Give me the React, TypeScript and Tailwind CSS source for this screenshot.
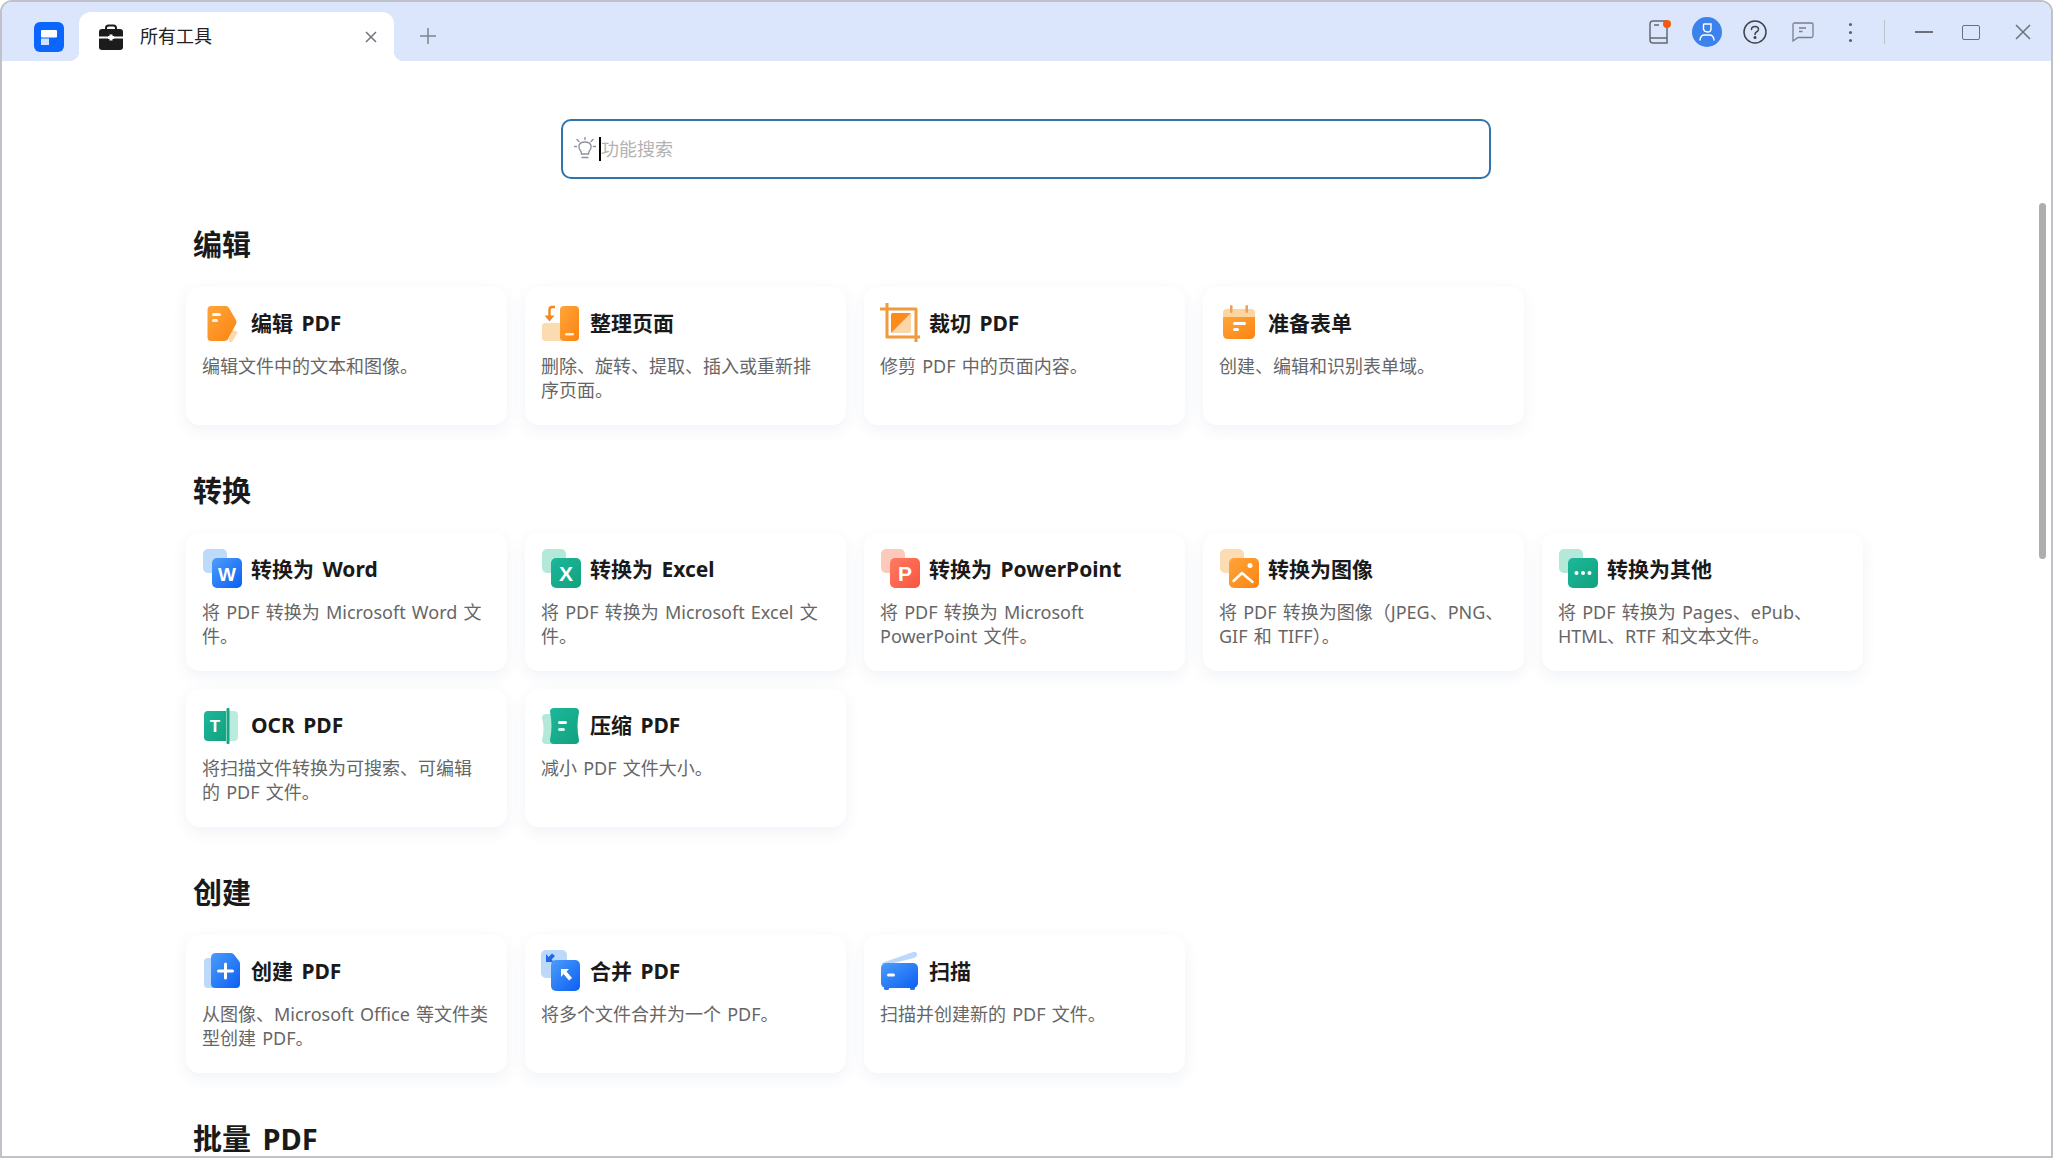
type Tool = { icon: string; title: string; desc: string };
type Section = { heading: string; tools: Tool[] };

const sections: Section[] = [
  {
    heading: "编辑",
    tools: [
      { icon: "edit", title: "编辑 PDF", desc: "编辑文件中的文本和图像。" },
      { icon: "pages", title: "整理页面", desc: "删除、旋转、提取、插入或重新排\n序页面。" },
      { icon: "crop", title: "裁切 PDF", desc: "修剪 PDF 中的页面内容。" },
      { icon: "form", title: "准备表单", desc: "创建、编辑和识别表单域。" },
    ],
  },
  {
    heading: "转换",
    tools: [
      { icon: "word", title: "转换为 Word", desc: "将 PDF 转换为 Microsoft Word 文\n件。" },
      { icon: "excel", title: "转换为 Excel", desc: "将 PDF 转换为 Microsoft Excel 文\n件。" },
      { icon: "ppt", title: "转换为 PowerPoint", desc: "将 PDF 转换为 Microsoft\nPowerPoint 文件。" },
      { icon: "image", title: "转换为图像", desc: "将 PDF 转换为图像（JPEG、PNG、\nGIF 和 TIFF）。" },
      { icon: "other", title: "转换为其他", desc: "将 PDF 转换为 Pages、ePub、\nHTML、RTF 和文本文件。" },
      { icon: "ocr", title: "OCR PDF", desc: "将扫描文件转换为可搜索、可编辑\n的 PDF 文件。" },
      { icon: "compress", title: "压缩 PDF", desc: "减小 PDF 文件大小。" },
    ],
  },
  {
    heading: "创建",
    tools: [
      { icon: "create", title: "创建 PDF", desc: "从图像、Microsoft Office 等文件类\n型创建 PDF。" },
      { icon: "merge", title: "合并 PDF", desc: "将多个文件合并为一个 PDF。" },
      { icon: "scan", title: "扫描", desc: "扫描并创建新的 PDF 文件。" },
    ],
  },
];

const svgFont = "Liberation Sans, Arial, sans-serif";

// shared gradients, the icons below refer to these by id
function Gradients() {
  return (
    <svg width="0" height="0" className="block h-0 w-0">
      <defs>
        <linearGradient id="g-orange" x1="0" y1="0" x2="1" y2="1">
          <stop offset="0" stopColor="#ffa53a" />
          <stop offset="1" stopColor="#fb8412" />
        </linearGradient>
        <linearGradient id="g-blue" x1="0" y1="0" x2="1" y2="1">
          <stop offset="0" stopColor="#4d9dfb" />
          <stop offset="1" stopColor="#0b5ff2" />
        </linearGradient>
        <linearGradient id="g-green" x1="0" y1="0" x2="1" y2="1">
          <stop offset="0" stopColor="#1cb79a" />
          <stop offset="1" stopColor="#12a27f" />
        </linearGradient>
        <linearGradient id="g-red" x1="0" y1="0" x2="1" y2="1">
          <stop offset="0" stopColor="#ff7b63" />
          <stop offset="1" stopColor="#f9543f" />
        </linearGradient>
      </defs>
    </svg>
  );
}

function StackedIcon({ back, front, children }: { back: string; front: string; children: React.ReactNode }) {
  return (
    <>
      <rect x="1" y="0" width="24" height="24" rx="5" fill={back} />
      <rect x="10" y="9" width="30" height="30" rx="5" fill={front} />
      {children}
    </>
  );
}

function ToolIcon({ name }: { name: string }) {
  let body: React.ReactNode = null;
  if (name === "edit") {
    body = (
      <>
        <path d="M30 27 L36 29 L30 39 Q27 40 27 36 Z" fill="#fcd9a8" />
        <path d="M9 3 H24 Q26 3 27 5 L34 17 Q35 19 34 21 L27 34 Q26 38 22 38 H9 Q5.500 38 5.500 34 V7 Q5.500 3 9 3 Z" fill="url(#g-orange)" />
        <rect x="10" y="10" width="9" height="3" rx="1.500" fill="#fff" opacity="0.9" />
        <rect x="10" y="16" width="6" height="3" rx="1.500" fill="#fff" opacity="0.9" />
      </>
    );
  }
  if (name === "pages") {
    body = (
      <>
        <rect x="1" y="20" width="20" height="18" rx="3" fill="#fbdcb0" />
        <path d="M14 4 H11 Q8.500 4 8.500 7 V15" fill="none" stroke="#f08a20" strokeWidth="2.500" />
        <path d="M3.500 12.500 H13.500 L8.500 18.500 Z" fill="#f08a20" />
        <rect x="19" y="3" width="19" height="35" rx="4" fill="url(#g-orange)" />
        <rect x="24" y="30" width="9" height="2.500" rx="1.200" fill="#fff" opacity="0.85" />
      </>
    );
  }
  if (name === "crop") {
    body = (
      <>
        <path d="M7 0 V34 H40 M0 6 H36 V39" fill="none" stroke="#ef9a3c" strokeWidth="3" strokeLinejoin="round" />
        <rect x="11" y="10" width="20" height="20" rx="2" fill="#fbd6a8" />
        <path d="M13 10 H31 L11 30 V12 Q11 10 13 10 Z" fill="#fb8c1b" />
      </>
    );
  }
  if (name === "form") {
    body = (
      <>
        <path d="M4 16 V10 Q4 6 8 6 H32 Q36 6 36 10 V16 Z" fill="#fcd5a0" />
        <rect x="11" y="2" width="2.500" height="8" rx="1.200" fill="#f0a050" />
        <rect x="26.500" y="2" width="2.500" height="8" rx="1.200" fill="#f0a050" />
        <path d="M4 14 H36 V31 Q36 36 31 36 H9 Q4 36 4 31 Z" fill="url(#g-orange)" />
        <rect x="14" y="19" width="13" height="3" rx="1.500" fill="#fff" />
        <rect x="14" y="25" width="6" height="3" rx="1.500" fill="#fff" />
      </>
    );
  }
  if (name === "word" || name === "excel" || name === "ppt") {
    const back = name === "word" ? "#bedafb" : name === "excel" ? "#b4e8d8" : "#fdc9bb";
    const front = name === "word" ? "url(#g-blue)" : name === "excel" ? "url(#g-green)" : "url(#g-red)";
    const letter = name === "word" ? "W" : name === "excel" ? "X" : "P";
    body = (
      <StackedIcon back={back} front={front}>
        <text x="25" y="32" textAnchor="middle" fontFamily={svgFont} fontWeight="700" fontSize={name === "word" ? 19 : 21} fill="#fff">
          {letter}
        </text>
      </StackedIcon>
    );
  }
  if (name === "image") {
    body = (
      <StackedIcon back="#fcdcb2" front="url(#g-orange)">
        <circle cx="31" cy="16.500" r="2.500" fill="#fff" />
        <path d="M14.500 32 L23 24 L33.500 33" fill="none" stroke="#fff" strokeWidth="2.500" strokeLinecap="round" strokeLinejoin="round" />
      </StackedIcon>
    );
  }
  if (name === "other") {
    body = (
      <StackedIcon back="#b4e8d8" front="url(#g-green)">
        <circle cx="18.500" cy="24" r="2" fill="#fff" />
        <circle cx="25" cy="24" r="2" fill="#fff" />
        <circle cx="31.500" cy="24" r="2" fill="#fff" />
      </StackedIcon>
    );
  }
  if (name === "ocr") {
    body = (
      <>
        <path d="M26 6 H32 Q36 6 36 10 V32 Q36 36 32 36 H26 Z" fill="#b9ecdd" />
        <path d="M6 6 H24 V36 H6 Q2 36 2 32 V10 Q2 6 6 6 Z" fill="url(#g-green)" />
        <rect x="24.500" y="3" width="3" height="36" rx="1" fill="#14a584" />
        <text x="13" y="27" textAnchor="middle" fontFamily={svgFont} fontWeight="700" fontSize="17" fill="#fff">
          T
        </text>
      </>
    );
  }
  if (name === "compress") {
    body = (
      <>
        <path d="M5 9 H14 V39 H5 Q1 39 1 35 Q4 24 1 13 Q1 9 5 9 Z" fill="#b4e8d8" />
        <path d="M13 3 H34 Q38 3 38 7 Q35 21 38 35 Q38 39 34 39 H13 Q9 39 9 35 Q12 21 9 7 Q9 3 13 3 Z" fill="url(#g-green)" />
        <rect x="17" y="16" width="9" height="3" rx="1.500" fill="#fff" />
        <rect x="17" y="23" width="7" height="3" rx="1.500" fill="#d5f5ec" />
      </>
    );
  }
  if (name === "create") {
    body = (
      <>
        <rect x="2" y="7" width="20" height="30" rx="4" fill="#bcd9fb" />
        <path d="M14 2 H29 Q31 2 32 3.500 L37 10 Q38 11 38 13 V33 Q38 37 34 37 H14 Q9 37 9 33 V7 Q9 2 14 2 Z" fill="url(#g-blue)" />
        <path d="M23.500 13 V27 M16.500 20 H30.500" stroke="#fff" strokeWidth="3" strokeLinecap="round" />
      </>
    );
  }
  if (name === "merge") {
    body = (
      <>
        <rect x="0" y="-1" width="26" height="28" rx="5" fill="#bcd9fb" />
        <path d="M5 3 L5 11 L13 11 L10.500 8.500 L14 5 L11 2.500 L7.500 6 Z" fill="#1c68ee" />
        <rect x="10" y="9" width="29" height="31" rx="5" fill="url(#g-blue)" />
        <path d="M20 18 H28 L25.500 20.500 L31 27 L28 29.500 L22.500 23 L20 26 Z" fill="#fff" />
      </>
    );
  }
  if (name === "scan") {
    body = (
      <>
        <path d="M2 12 L33 1 Q37 0 37 4 Q37 6 34 7 L6 14 Q1 14 2 12 Z" fill="#bcd9fb" />
        <rect x="4" y="35" width="5" height="4" rx="1.500" fill="#2a76f0" />
        <rect x="30" y="35" width="5" height="4" rx="1.500" fill="#2a76f0" />
        <rect x="1" y="12" width="37" height="25" rx="5" fill="url(#g-blue)" />
        <rect x="7" y="22.500" width="8" height="3" rx="1.500" fill="#fff" />
      </>
    );
  }
  return (
    <svg width="40" height="40" viewBox="0 0 40 40" className="shrink-0 overflow-visible">
      {body}
    </svg>
  );
}

function ToolCard({ tool }: { tool: Tool }) {
  return (
    <div className="h-[138px] rounded-[14px] bg-white pl-[16px] pt-[16px] shadow-[0_5px_16px_rgba(40,70,130,0.07)]">
      <div className="flex h-[40px] items-center gap-[9px]">
        <ToolIcon name={tool.icon} />
        <span className="text-[21px] leading-[28px] font-bold [word-spacing:3px] text-[#1a1a1a]">{tool.title}</span>
      </div>
      <p className="mt-[11px] text-[18px] leading-[24px] whitespace-pre [word-spacing:1.5px] text-[#666666]">{tool.desc}</p>
    </div>
  );
}

function TitleBar() {
  return (
    <header className="flex h-[59px] shrink-0 items-end bg-[#dbe5fb]">
      <div className="mb-[9px] ml-[32px] flex h-[30px] w-[30px] shrink-0 items-center justify-center self-end rounded-[6px] bg-[#0a66ff]">
        <svg width="30" height="30" viewBox="0 0 30 30">
          <rect x="7" y="8" width="16" height="7.500" rx="1" fill="#fff" />
          <rect x="7" y="16.500" width="8" height="6.500" fill="#cfe2ff" />
        </svg>
      </div>
      <div className="relative ml-[15px] flex h-[49px] w-[315px] shrink-0 items-center rounded-t-[12px] bg-white pl-[20px] pr-[17px] before:absolute before:bottom-0 before:left-[-10px] before:h-[10px] before:w-[10px] before:bg-[radial-gradient(circle_at_0_0,transparent_10px,white_10.5px)] after:absolute after:right-[-10px] after:bottom-0 after:h-[10px] after:w-[10px] after:bg-[radial-gradient(circle_at_100%_0,transparent_10px,white_10.5px)]">
        <svg width="24" height="26" viewBox="0 0 24 26" className="shrink-0">
          <path d="M7 6 V4 Q7 1.500 9.500 1.500 H14.500 Q17 1.500 17 4 V6" fill="none" stroke="#1c1c1c" strokeWidth="2" />
          <path d="M3 5 H21 Q24 5 24 8 V12.500 H0 V8 Q0 5 3 5 Z" fill="#1c1c1c" />
          <path d="M0 14.500 H24 V23 Q24 26 21 26 H3 Q0 26 0 23 Z" fill="#1c1c1c" />
          <path d="M9 12 H10.500 V10.500 H13.500 V12 H15 V15 H13.500 V16.500 H10.500 V15 H9 Z" fill="#fff" />
        </svg>
        <span className="ml-[17px] text-[18px] text-[#222222]">所有工具</span>
        <svg width="12" height="12" viewBox="0 0 12 12" className="ml-auto" stroke="#70747c" strokeWidth="1.500">
          <path d="M1 1 L11 11 M11 1 L1 11" />
        </svg>
      </div>
      <svg width="16" height="16" viewBox="0 0 16 16" className="mb-[17px] ml-[26px]" stroke="#7d828e" strokeWidth="1.500">
        <path d="M8 0 V16 M0 8 H16" />
      </svg>
      <div className="ml-auto flex h-[58px] items-center self-start pt-[2px]">
        <div className="flex w-[48px] justify-center">
          <svg width="24" height="26" viewBox="0 0 24 26" fill="none" className="overflow-visible">
            <path d="M3 5 Q3 2 6 2 H20 V24 H6 Q3 24 3 21 Z" stroke="#666a72" strokeWidth="1.500" />
            <path d="M3 19 H20 M7 6 H12" stroke="#666a72" strokeWidth="1.500" />
            <circle cx="20" cy="5" r="4" fill="#f4590f" />
          </svg>
        </div>
        <div className="flex w-[48px] justify-center">
          <div className="flex h-[30px] w-[30px] items-center justify-center rounded-full bg-[#3b82ec]">
            <svg width="18" height="20" viewBox="0 0 18 20" fill="none" stroke="#fff" strokeWidth="1.400">
              <path d="M6 2 H13 V7 Q13 10 9.500 10 Q6 10 5.500 7 V3 Z" />
              <path d="M2 18 Q2.500 13 6.500 13 H11.500 Q15.500 13 16 18" strokeLinecap="round" />
            </svg>
          </div>
        </div>
        <div className="flex w-[48px] justify-center">
          <svg width="24" height="24" viewBox="0 0 24 24" fill="none" stroke="#3f434a" strokeWidth="1.500">
            <circle cx="12" cy="12" r="11" />
            <path d="M8.500 9.500 Q8.500 6.500 12 6.500 Q15.500 6.500 15.500 9.300 Q15.500 11 13.500 12 Q12 12.800 12 14.500" strokeLinecap="round" />
            <circle cx="12" cy="17.500" r="0.800" fill="#3f434a" />
          </svg>
        </div>
        <div className="flex w-[48px] justify-center">
          <svg width="22" height="20" viewBox="0 0 22 20" fill="none" stroke="#7a7f88" strokeWidth="1.300">
            <path d="M1 2.500 Q1 1 2.500 1 H19.500 Q21 1 21 2.500 V14 Q21 15.500 19.500 15.500 H6 L1 19 Z" />
            <path d="M7 6 H14 M7 9.500 H10.500" />
          </svg>
        </div>
        <div className="flex w-[48px] flex-col items-center gap-[5px]">
          <span className="h-[3px] w-[3px] rounded-full bg-[#5b6068]" />
          <span className="h-[3px] w-[3px] rounded-full bg-[#5b6068]" />
          <span className="h-[3px] w-[3px] rounded-full bg-[#5b6068]" />
        </div>
        <div className="ml-[9px] h-[24px] w-[1.5px] bg-[#bcc2ce]" />
        <div className="ml-[15px] flex w-[48px] justify-center">
          <div className="h-[1.5px] w-[18px] bg-[#6b7078]" />
        </div>
        <div className="flex w-[46px] justify-center">
          <div className="h-[15px] w-[18px] rounded-[2px] border-[1.5px] border-[#6b7078]" />
        </div>
        <div className="flex w-[57px] justify-center">
          <svg width="16" height="16" viewBox="0 0 16 16" stroke="#6b7078" strokeWidth="1.500">
            <path d="M1 1 L15 15 M15 1 L1 15" />
          </svg>
        </div>
      </div>
    </header>
  );
}

export default function App() {
  return (
    <div className="relative flex h-screen w-screen flex-col overflow-hidden rounded-t-[12px] border-2 border-[#bfc2c8] bg-white font-['Noto_Sans','Noto_Sans_CJK_SC',sans-serif]">
      <Gradients />
      <TitleBar />
      <main className="min-h-0 flex-1 overflow-hidden pt-[58px]">
        <div className="ml-[559px] flex h-[60px] w-[930px] items-center rounded-[10px] border-2 border-[#2f74ad] pl-[11px]">
          <svg width="22" height="24" viewBox="0 0 22 24" fill="none" stroke="#8d929e" strokeWidth="1.400" className="shrink-0">
            <path d="M7.500 17 Q7.500 14.500 6 13 Q4.500 11 5 8.500 Q6 5 11 5 Q16 5 17 8.500 Q17.500 11 16 13 Q14.500 14.500 14.500 17 Z" />
            <path d="M8 20.500 H14 M11 0 V2.500 M3 2.500 L5 4.500 M19 2.500 L17 4.500 M0 9.500 H2.500 M19.500 9.500 H22" strokeLinecap="round" />
          </svg>
          <span className="ml-[3px] h-[24px] w-[2px] shrink-0 bg-black" />
          <span className="text-[18px] text-[#b2b2b2]">功能搜索</span>
        </div>
        <div className="mt-[46px] pl-[184px]">
          {sections.map((section) => (
            <section key={section.heading} className="mb-[46px]">
              <h2 className="ml-[7px] text-[29px] leading-[40px] font-bold text-[#1a1a1a]">{section.heading}</h2>
              <div className="mt-[22px] grid grid-cols-[repeat(5,321px)] auto-rows-[138px] gap-[18px]">
                {section.tools.map((tool) => (
                  <ToolCard key={tool.title} tool={tool} />
                ))}
              </div>
            </section>
          ))}
          <h2 className="ml-[7px] pt-[5px] text-[29px] leading-[30px] font-bold [word-spacing:4px] text-[#1a1a1a]">批量 PDF</h2>
        </div>
      </main>
      {/* scrollbar thumb floats over the page */}
      <div className="absolute top-[201px] right-[5px] h-[356px] w-[7px] rounded-full bg-[#aeaeae]" />
    </div>
  );
}
